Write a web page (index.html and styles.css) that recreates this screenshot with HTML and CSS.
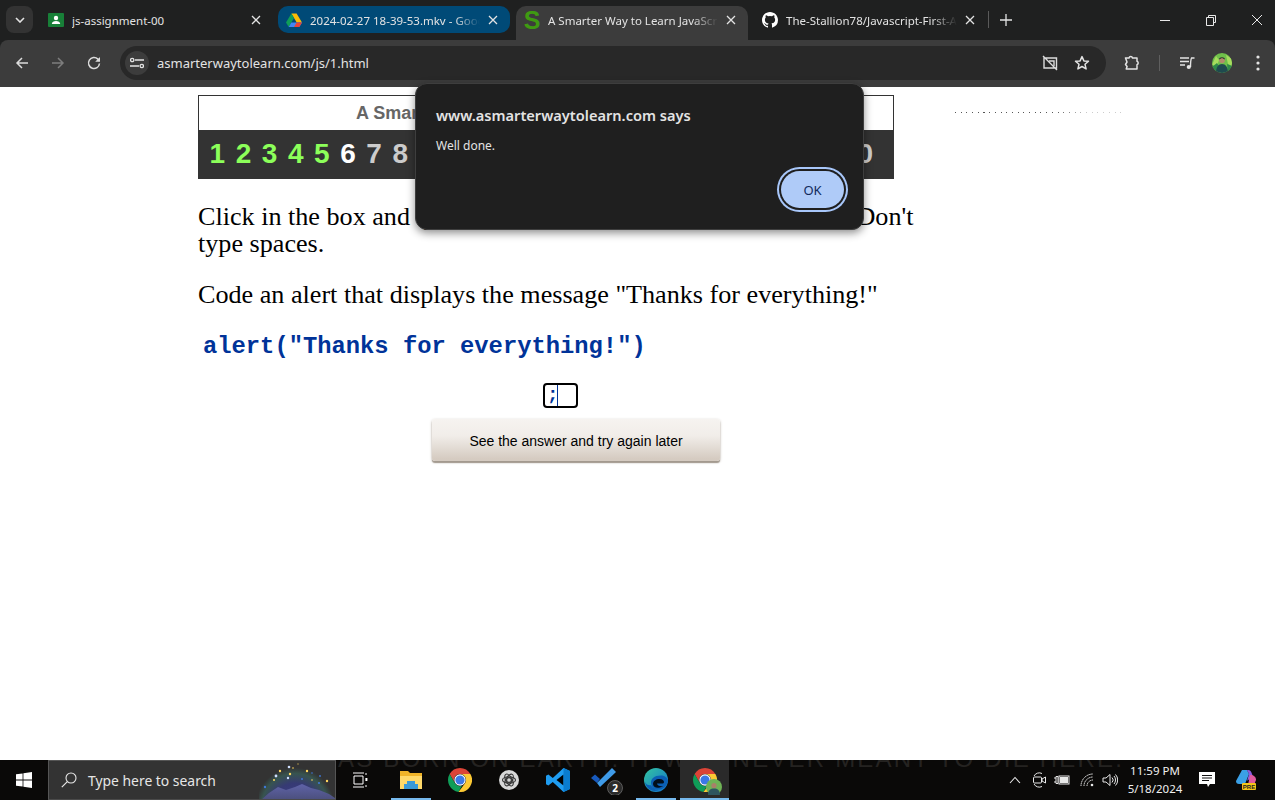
FILE: index.html
```html
<!DOCTYPE html>
<html lang="en">
<head>
<meta charset="utf-8">
<title>A Smarter Way to Learn JavaScript</title>
<link rel="stylesheet" href="styles.css">
</head>
<body>
<svg class="defs" width="0" height="0" aria-hidden="true">
  <symbol id="x" viewBox="0 0 10 10"><path d="M1 1l8 8M9 1l-8 8" fill="none" stroke="currentColor" stroke-width="1.3"/></symbol>
  <symbol id="chrome" viewBox="0 0 24 24">
    <path fill="#db4437" d="M12 0A12 12 0 0 1 22.39 6H12A6 6 0 0 0 6.8 15L1.6 6A12 12 0 0 1 12 0Z"/>
    <path fill="#0f9d58" d="M1.6 6L6.8 15A6 6 0 0 0 14 17.7L10.5 23.9A12 12 0 0 1 1.6 6Z"/>
    <path fill="#fcc934" d="M22.39 6H12A6 6 0 0 1 17.2 15L10.5 23.9A12 12 0 0 0 22.39 6Z"/>
    <circle cx="12" cy="12" r="5.7" fill="#fff"/><circle cx="12" cy="12" r="4.6" fill="#3b78e7"/>
  </symbol>
</svg>

<header class="browser">
  <div class="tabstrip">
    <div class="tabsearch"><svg width="10" height="6" viewBox="0 0 10 6"><path d="M1 1l4 4 4-4" fill="none" stroke="#e3e3e3" stroke-width="1.6"/></svg></div>
    <div class="tab tab-a">
      <svg class="fav" viewBox="0 0 16 16"><rect y="1" width="16" height="14" rx="1" fill="#188038"/><circle cx="8" cy="6" r="2.2" fill="#fff"/><path d="M3.8 12c0-2 2-3 4.2-3s4.2 1 4.2 3z" fill="#fff"/></svg>
      <span class="tab-title">js-assignment-00</span>
      <svg class="tab-x"><use href="#x"/></svg>
    </div>
    <div class="tab tab-b">
      <svg class="fav" viewBox="0 0 16 16"><path d="M5.4 1.5h5.2L16 10.6h-5.3z" fill="#fbbc04"/><path d="M5.4 1.5L0 10.6l2.7 4.4 5.3-8.9z" fill="#0f9d58"/><path d="M5.3 10.6H16L13.3 15H2.7z" fill="#4285f4"/><path d="M10.7 10.6H16L13.3 15H8z" fill="#ea4335"/></svg>
      <span class="tab-title">2024-02-27 18-39-53.mkv - Google Drive</span>
      <svg class="tab-x"><use href="#x"/></svg>
    </div>
    <div class="tab tab-c">
      <span class="fav-s">S</span>
      <span class="tab-title">A Smarter Way to Learn JavaScript</span>
      <svg class="tab-x"><use href="#x"/></svg>
    </div>
    <div class="tab tab-d">
      <svg class="fav" viewBox="0 0 16 16"><path fill="#fff" d="M8 0C3.58 0 0 3.58 0 8c0 3.54 2.29 6.53 5.47 7.59.4.07.55-.17.55-.38v-1.34c-2.23.48-2.7-1.07-2.7-1.07-.36-.92-.89-1.17-.89-1.17-.73-.5.05-.49.05-.49.8.06 1.23.83 1.23.83.71 1.22 1.87.87 2.33.66.07-.52.28-.87.51-1.07-1.78-.2-3.64-.89-3.64-3.95 0-.87.31-1.59.83-2.15-.08-.2-.36-1.02.08-2.12 0 0 .67-.21 2.2.82a7.6 7.6 0 0 1 4 0c1.53-1.04 2.2-.82 2.2-.82.44 1.1.16 1.92.08 2.12.51.56.82 1.27.82 2.15 0 3.07-1.87 3.75-3.65 3.95.29.25.54.73.54 1.48v2.2c0 .21.15.46.55.38A8 8 0 0 0 16 8c0-4.42-3.58-8-8-8z"/></svg>
      <span class="tab-title">The-Stallion78/Javascript-First-Assignment</span>
      <svg class="tab-x"><use href="#x"/></svg>
    </div>
    <span class="tab-sep"></span>
    <svg class="newtab" viewBox="0 0 12 12"><path d="M6 0v12M0 6h12" stroke="#e3e3e3" stroke-width="1.3"/></svg>
    <div class="winctl">
      <svg viewBox="0 0 12 12"><path d="M1 6.5h10" stroke="#e8e8e8"/></svg>
      <svg viewBox="0 0 12 12"><path d="M1.500 3.500h7v8h-7zM3.500 3.500v-2h7v7h-2" fill="none" stroke="#e8e8e8"/></svg>
      <svg viewBox="0 0 12 12"><path d="M1 1l10 10M11 1L1 11" stroke="#e8e8e8"/></svg>
    </div>
  </div>
  <div class="toolbar">
    <svg class="nav nav-back" viewBox="0 0 14 14"><path d="M13 7H2M7 2L2 7l5 5" fill="none" stroke="#dcdcdc" stroke-width="1.5"/></svg>
    <svg class="nav nav-fwd" viewBox="0 0 14 14"><path d="M1 7h11M7 2l5 5-5 5" fill="none" stroke="#7d7d7d" stroke-width="1.5"/></svg>
    <svg class="nav nav-reload" viewBox="0 0 14 14"><path d="M12.500 7.500A5.500 5.500 0 1 1 10.900 3.100L12.500 5" fill="none" stroke="#dcdcdc" stroke-width="1.5"/><path d="M13 1v4.800H8.200z" fill="#dcdcdc"/></svg>
    <div class="omnibox">
      <div class="site-btn"><svg width="14" height="12" viewBox="0 0 14 12"><path d="M5 3h9M0 9h9" stroke="#e3e3e3" stroke-width="1.4"/><circle cx="2.200" cy="3" r="1.700" fill="none" stroke="#e3e3e3" stroke-width="1.3"/><circle cx="11.800" cy="9" r="1.700" fill="none" stroke="#e3e3e3" stroke-width="1.3"/></svg></div>
      <span class="url">asmarterwaytolearn.com/js/1.html</span>
      <svg class="omni-ico omni-cam" viewBox="0 0 16 16"><path d="M2 3h12.500v10H2zM1 1l14 14" fill="none" stroke="#dcdcdc" stroke-width="1.4"/><path d="M7 6h5v5" fill="none" stroke="#dcdcdc" stroke-width="1.4"/></svg>
      <svg class="omni-ico omni-star" viewBox="0 0 16 16"><path d="M8 1.600l1.900 4.300 4.600.4-3.500 3 1.100 4.600L8 11.500l-4.100 2.400L5 9.300l-3.500-3 4.600-.4z" fill="none" stroke="#e3e3e3" stroke-width="1.500" stroke-linejoin="round"/></svg>
    </div>
    <svg class="tool tool-ext" viewBox="0 0 16 16"><path d="M1.500 3H5a1.800 1.800 0 0 1 3.500 0H13v3.300a1.800 1.800 0 0 1 0 3.400V14H2.200l.9-2.600L1.500 9.500 3 7z" fill="none" stroke="#e3e3e3" stroke-width="1.500" stroke-linejoin="round"/></svg>
    <span class="tool-sep"></span>
    <svg class="tool tool-media" viewBox="0 0 16 16"><path d="M1 3h9M1 6.500h9M1 10h5" stroke="#e3e3e3" stroke-width="1.400"/><path d="M11.500 12c0-4 .5-8 1-9H15.500" fill="none" stroke="#e3e3e3" stroke-width="1.400"/><circle cx="9.800" cy="12" r="2.100" fill="#e3e3e3"/></svg>
    <svg class="avatar" viewBox="0 0 20 20"><defs><clipPath id="av"><circle cx="10" cy="10" r="10"/></clipPath></defs><g clip-path="url(#av)"><rect width="20" height="20" fill="#6fc04a"/><path d="M0 12L4 3l3 4-2 6zM14 2l6 4v7l-4-2z" fill="#a7dc5e"/><path d="M0 14l5-4 2 3-3 7H0zM15 11l5 2v7h-4z" fill="#2f8a4a"/><circle cx="10" cy="7.500" r="2.800" fill="#b48a6c"/><path d="M7 6.500C7 3.500 13 3.500 13 6.500L10 5z" fill="#26302c"/><path d="M4 20c0-6 2.500-9 6-9s6 3 6 9z" fill="#1f4a4f"/></g></svg>
    <svg class="tool-menu" viewBox="0 0 4 16"><circle cx="2" cy="2" r="1.600" fill="#e3e3e3"/><circle cx="2" cy="8" r="1.600" fill="#e3e3e3"/><circle cx="2" cy="14" r="1.600" fill="#e3e3e3"/></svg>
  </div>
</header>

<main class="page">
  <div class="lesson">
    <section class="banner">
      <div class="banner-title">A Smarter Way to Learn JavaScript Exercises</div>
      <div class="banner-nums">
        <span class="done">1</span><span class="done">2</span><span class="done">3</span><span class="done">4</span><span class="done">5</span><span class="now">6</span><span>7</span><span>8</span><span>9</span><span>10</span><span>11</span><span>12</span><span>13</span><span>14</span><span>15</span><span>16</span><span>17</span><span>18</span><span class="last">20</span>
      </div>
    </section>
    <p class="instr">Click in the box and type the code, then press Enter to answer. Don't type spaces.</p>
    <p class="instr task">Code an alert that displays the message "Thanks for everything!"</p>
    <p class="code">alert("Thanks for everything!")</p>
    <div class="answer"><div class="answer-box"><span class="semi">;</span><span class="caret"></span></div></div>
    <div class="answer-btn-row"><button class="see-btn">See the answer and try again later</button></div>
  </div>
  <div class="dots"></div>

  <div class="dialog" role="alertdialog">
    <div class="dlg-title">www.asmarterwaytolearn.com says</div>
    <div class="dlg-msg">Well done.</div>
    <div class="dlg-actions"><button class="dlg-ok">OK</button></div>
  </div>
</main>

<footer class="taskbar">
  <div class="wall">AS BORN ON EARTH. IT WAS NEVER MEANT TO DIE HERE.</div>
  <div class="start"><svg width="16" height="16" viewBox="0 0 16 16"><path fill="#fff" d="M0 2.300L6.600 1.400V7.600H0zM7.400 1.300L16 0V7.600H7.400zM0 8.400H6.600V14.600L0 13.700zM7.400 8.400H16V16L7.400 14.700z"/></svg></div>
  <div class="search">
    <svg class="search-ico" viewBox="0 0 16 16"><circle cx="10" cy="6" r="5" fill="none" stroke="#e6e6e6" stroke-width="1.100"/><path d="M6.300 9.700L.8 15.200" stroke="#e6e6e6" stroke-width="1.200"/></svg>
    <span class="search-text">Type here to search</span>
    <svg class="search-art" viewBox="0 0 76 40"><defs><radialGradient id="glow" cx="50%" cy="62%" r="52%"><stop offset="0" stop-color="#3e3f8e"/><stop offset=".6" stop-color="#363a74"/><stop offset=".85" stop-color="#37544f"/><stop offset="1" stop-color="#333"/></radialGradient><linearGradient id="mtn" x1="0" y1="0" x2="0" y2="1"><stop offset="0" stop-color="#5f63a8"/><stop offset="1" stop-color="#4b4f7c"/></linearGradient></defs><ellipse cx="36" cy="38" rx="38" ry="38" fill="url(#glow)"/><path d="M2 40L10 33 19 27 27 30 36 27 43 24 52 28 60 30 70 34 76 38V40z" fill="url(#mtn)"/><g fill="#ffd75e"><circle cx="21" cy="11" r="1.200"/><circle cx="31" cy="14" r="1.200"/><circle cx="48" cy="11" r="1.200"/><circle cx="68" cy="21" r="1.200"/><circle cx="15" cy="20" r="1"/><circle cx="53" cy="20" r=".8"/><circle cx="34" cy="8" r=".8"/><circle cx="39" cy="4" r=".8" opacity=".6"/></g><g fill="#cfe0ff"><circle cx="30" cy="7" r="1.300"/><circle cx="17" cy="16" r="1.400"/><circle cx="29" cy="18" r="1.200"/></g><g fill="#3f78d8"><circle cx="6" cy="27" r="1.200"/><circle cx="43" cy="19" r="1"/><circle cx="60" cy="23" r="1.100"/><circle cx="61" cy="16" r=".9"/><circle cx="53" cy="13" r=".8"/></g></svg>
  </div>
  <div class="taskview"><svg width="16" height="16" viewBox="0 0 16 16"><path d="M1 1h11M1 15h11M2 4h9v8H2z" fill="none" stroke="#fff"/><path d="M14 1v2M14 13v2" stroke="#fff"/><rect x="13.400" y="6" width="2" height="3" fill="#fff"/></svg></div>
  <div class="apps">
    <div class="app on"><svg width="22" height="20" viewBox="0 0 22 20"><path d="M0 1h8l2 2h12v16H0z" fill="#f0b429"/><path d="M0 6h22v13H0z" fill="#ffd96a"/><path d="M7 11h8v3h3v5H4v-5h3z" fill="#3a9ad9"/></svg></div>
    <div class="app"><svg width="24" height="24"><use href="#chrome"/></svg></div>
    <div class="app"><svg width="20" height="20" viewBox="0 0 20 20"><circle cx="10" cy="10" r="10" fill="#d8d8d8"/><g fill="none" stroke="#333" stroke-width="1.100"><circle cx="10" cy="10" r="2.400"/><ellipse cx="10" cy="10" rx="6.500" ry="3.200"/><ellipse cx="10" cy="10" rx="6.500" ry="3.200" transform="rotate(60 10 10)"/><ellipse cx="10" cy="10" rx="6.500" ry="3.200" transform="rotate(120 10 10)"/></g></svg></div>
    <div class="app"><svg width="24" height="24" viewBox="0 0 24 24"><path d="M17.500 0L24 3v18l-6.500 3L6.800 14 2.400 17.500 0 16.300V7.700L2.400 6.500 6.800 10z" fill="#1f9cf0"/><path d="M17.500 6.500L10.500 12l7 5.500z" fill="#000"/><path d="M17.500 0L24 3v18l-6.500 3z" fill="#0a7ccf"/></svg></div>
    <div class="app"><svg width="32" height="30" viewBox="0 0 32 30"><path d="M0 13l4-3.500L9 14 6 18z" fill="#185abd"/><path d="M6 18L21 3l4 4L9 22z" fill="#3f9be8"/><circle cx="24" cy="23" r="7.500" fill="#2b2b2b" stroke="#888" stroke-width=".6"/><text class="badge-2" x="24" y="27">2</text></svg></div>
    <div class="app on"><svg width="24" height="24" viewBox="0 0 24 24"><defs><linearGradient id="edge" x1="0" y1="0" x2="1" y2="1"><stop offset="0" stop-color="#34c6a0"/><stop offset="1" stop-color="#1070d0"/></linearGradient></defs><circle cx="12" cy="12" r="12" fill="url(#edge)"/><path d="M24 13c0-3-3-5.500-7-5.500C10 7.500 7 11 7 14.500c0 4 3.500 7.500 8 7.500-6 3-13-1-14-8 1 2.500 4 4 6 3 1 3 5 5 9 4.500 4-.5 7-4 8-8.500z" fill="#0b5fb4"/><path d="M9 16c0-3 3-5 6.500-5 3 0 4.500 1.500 4.500 3 0 1-1 1.500-2 1.500h-5c0 2 3 3 6 2.500-4 3-10 2-10-2z" fill="#000" opacity=".85"/></svg></div>
    <div class="app active on"><svg width="24" height="24"><use href="#chrome"/></svg><svg class="app-avatar" viewBox="0 0 16 16"><circle cx="8" cy="8" r="8" fill="#6fb356"/><circle cx="8" cy="6.500" r="2.600" fill="#a98069"/><path d="M2 16c0-5 2.500-6.500 6-6.500s6 1.500 6 6.500z" fill="#2e5560"/></svg></div>
  </div>
  <div class="tray">
    <svg class="tr tr-chev" viewBox="0 0 12 8"><path d="M1 7l5-5.500L11 7" fill="none" stroke="#e8e8e8" stroke-width="1.100"/></svg>
    <svg class="tr tr-meet" viewBox="0 0 16 16"><path d="M3 4a6 6 0 0 1 8 -2.500M3 12a6 6 0 0 0 8 2.500" fill="none" stroke="#e8e8e8"/><rect x="2.500" y="5" width="8" height="6" rx="1" fill="none" stroke="#e8e8e8"/><path d="M11 7l3.500-2v6L11 9z" fill="none" stroke="#e8e8e8"/></svg>
    <svg class="tr tr-batt" viewBox="0 0 16 12"><path d="M0 4h2M0 8h2M2 2.500h2v7H2z" stroke="#e8e8e8" fill="none"/><rect x="5" y="2" width="10" height="8" fill="none" stroke="#e8e8e8"/><rect x="6" y="3" width="8" height="6" fill="#e8e8e8"/></svg>
    <svg class="tr tr-wifi" viewBox="0 0 16 14"><path d="M1 13a12 12 0 0 1 12-12M4 13a9 9 0 0 1 9-9M7 13a6 6 0 0 1 6-6" fill="none" stroke="#e8e8e8" stroke-dasharray="1.500 .5"/><circle cx="12" cy="12" r="1.300" fill="#e8e8e8"/></svg>
    <svg class="tr tr-vol" viewBox="0 0 16 14"><path d="M1 5h3l4-3.500v11L4 9H1z" fill="none" stroke="#e8e8e8"/><path d="M10 4.500a3.500 3.500 0 0 1 0 5M12 3a6 6 0 0 1 0 8M13.500 1.500a8 8 0 0 1 0 11" fill="none" stroke="#e8e8e8"/></svg>
    <div class="clock"><span>11:59 PM</span><span>5/18/2024</span></div>
    <svg class="tr tr-note" viewBox="0 0 16 16"><path d="M0 0h16v12h-5l-2 3-1-3H0z" fill="#fff"/><path d="M3 3.500h10M3 6h10M3 8.500h7" stroke="#111"/></svg>
    <svg class="tr tr-copilot" viewBox="0 0 22 22"><path d="M6 1h5l2 4-4 10H3a3 3 0 0 1-3-3z" fill="#3ba0e6"/><path d="M11 1c3-.500 4 1 5 4l3 8c-3-3-6-3-8-1l2-7z" fill="#8a5be0"/><path d="M14 6c4 0 6 2 6 5l-2 5h-6z" fill="#e05a9e"/><rect x="6" y="14" width="14" height="7" rx="1" fill="#f5c518"/><text class="pre" x="13" y="20">PRE</text></svg>
  </div>
</footer>
</body>
</html>
```
FILE: styles.css
```css
* { box-sizing: border-box; }
html, body { margin: 0; height: 100%; }
body {
  width: 1275px;
  height: 800px;
  overflow: hidden;
  display: flex;
  flex-direction: column;
  background: #fff;
  font-family: "Liberation Serif", serif;
}
.defs { position: absolute; }

/* browser chrome */
.browser { flex: none; height: 87px; background: #1f2020; font-family: "Noto Sans", sans-serif; }
.tabstrip { height: 40px; display: flex; align-items: flex-start; padding: 6px 0 0 6px; position: relative; }
.tabsearch { width: 27px; height: 27px; border-radius: 8px; background: #333; display: flex; align-items: center; justify-content: center; flex: none; }
.tab { flex: none; display: flex; align-items: center; height: 27px; font-size: 11.5px; color: #e3e3e3; }
.fav { width: 16px; height: 16px; flex: none; }
.tab-title { flex: 1; min-width: 0; white-space: nowrap; overflow: hidden; margin-left: 8px; padding-top: 1px; -webkit-mask-image: linear-gradient(to right, #000 85%, transparent); mask-image: linear-gradient(to right, #000 85%, transparent); }
.tab-x { width: 10px; height: 10px; flex: none; margin-left: 8px; margin-right: 12px; color: #e3e3e3; }
.tab-a { width: 225px; margin-left: 15px; }
.tab-a .tab-title { -webkit-mask-image: none; mask-image: none; }
.tab-b { width: 232px; margin-left: 5px; padding-left: 8px; background: #004a77; border-radius: 10px; }
.tab-c { width: 232px; margin-left: 6px; height: 34px; padding: 0 0 6px 6px; background: #3c3c3c; border-radius: 10px 10px 0 0; }
.tab-c .tab-title { margin-left: 6px; }
.fav-s { width: 20px; flex: none; color: #3f9a12; font: bold 25px/1 "Liberation Sans", sans-serif; text-align: center; }
.tab-d { width: 225px; margin-left: 14px; }
.tab-sep { width: 1px; height: 17px; margin: 5px 0 0 1px; background: #5a5a5a; flex: none; }
.newtab { width: 12px; height: 12px; margin: 8px 0 0 11px; flex: none; }
.winctl { display: flex; margin-left: auto; padding-right: 12px; gap: 34px; margin-top: 8px; }
.winctl svg { width: 12px; height: 12px; }

.toolbar { height: 47px; display: flex; align-items: center; padding-bottom: 1px; background: #3c3c3c; border-radius: 8px 8px 0 0; }
.nav { width: 14px; height: 14px; flex: none; }
.nav-back { margin-left: 15px; }
.nav-fwd { margin-left: 22px; }
.nav-reload { margin-left: 22px; }
.omnibox { width: 986px; height: 34px; margin-left: 19px; border-radius: 17px; background: #282828; display: flex; align-items: center; padding: 0 16px 0 5px; flex: none; }
.site-btn { width: 24px; height: 24px; border-radius: 50%; background: #3c3c3c; display: flex; align-items: center; justify-content: center; flex: none; }
.url { margin-left: 8px; font-size: 13px; color: #e3e3e3; }
.omni-ico { width: 16px; height: 16px; flex: none; }
.omni-cam { margin-left: auto; }
.omni-star { margin-left: 16px; }
.tool { width: 16px; height: 16px; flex: none; }
.tool-ext { margin-left: 18px; }
.tool-sep { width: 1px; height: 16px; margin-left: 19px; background: #5f5f5f; flex: none; }
.tool-media { margin-left: 19px; }
.avatar { width: 20px; height: 20px; margin-left: 17px; flex: none; }
.tool-menu { width: 4px; height: 16px; margin-left: 24px; flex: none; }

/* page */
.page { flex: 1; min-height: 0; position: relative; display: flex; align-items: flex-start; padding: 8px 0 0 198px; }
.lesson { width: 722px; flex: none; }
.banner { width: 696px; height: 84px; border: 1px solid #333; display: flex; flex-direction: column; font-family: "Liberation Sans", sans-serif; font-weight: bold; }
.banner-title { height: 34px; line-height: 34px; padding-left: 157px; font-size: 18px; color: #666; white-space: nowrap; }
.banner-nums { flex: 1; display: flex; align-items: center; gap: 10.55px; padding: 0 20px 0 10.5px; background: #333; color: #ccc; font-size: 28px; }
.banner-nums .done { color: #8cff5a; }
.banner-nums .now { color: #fff; }
.banner-nums .last { margin-left: auto; }
.instr { margin: 24px 0 0; width: 722px; font-size: 26.15px; line-height: 27px; color: #000; }
.instr.task { margin-top: 24px; }
.code { margin: 25px 0 0 5px; font: bold 23.8px/27px "Liberation Mono", monospace; color: #003399; }
.answer { display: flex; margin-top: 23px; padding-left: 345px; }
.answer-box { width: 35px; height: 25px; border: 2px solid #000; border-radius: 4px; display: flex; align-items: center; font: bold 19px/1 "Liberation Mono", monospace; color: #003399; padding-left: 2px; }
.semi { width: 10px; }
.caret { width: 1px; height: 21px; background: #003399; }
.answer-btn-row { padding-left: 234px; margin-top: 11px; }
.see-btn { display: block; width: 288px; height: 42px; border: 0; padding: 2px 0 0; border-radius: 3px; font: 14px "Liberation Sans", sans-serif; color: #000; background: linear-gradient(to bottom, #f6f3f0 0%, #f1ede9 40%, #d5cbc1 95%); box-shadow: 0 2px 1px #a39a8f, 0 1px 3px #bdb6ae; }
.dots { width: 166px; height: 1px; margin: 17px 0 0 35px; background: repeating-linear-gradient(to right, #555 0, #555 1px, transparent 1px, transparent 5.7px); -webkit-mask-image: linear-gradient(to right, #000 60%, rgba(0,0,0,.3) 80%); mask-image: linear-gradient(to right, #000 60%, rgba(0,0,0,.3) 80%); }

/* alert dialog */
.dialog { position: absolute; left: 415px; top: -4px; width: 449px; height: 147px; padding: 21px 19px 0 20px; border-radius: 12px; background: #1f1f1f; border: 1px solid #3e3e3e; box-shadow: 0 3px 8px rgba(0,0,0,.45); font-family: "Noto Sans", sans-serif; color: #e3e3e3; }
.dlg-title { font-size: 14.6px; line-height: 20px; font-weight: 600; }
.dlg-msg { font-size: 12px; line-height: 18px; margin-top: 12px; }
.dlg-actions { display: flex; justify-content: flex-end; margin-top: 16px; }
.dlg-ok { width: 63px; height: 37px; padding: 0; border-radius: 19px; border: 0; box-shadow: 0 0 0 2px #1f1f1f, 0 0 0 4px #a8c7fa; background: #afcbf8; color: #0f2a5c; font: 13px "Noto Sans", sans-serif; }

/* taskbar */
.taskbar { flex: none; height: 40px; position: relative; display: flex; overflow: hidden; background: #0a0908; font-family: "Noto Sans", sans-serif; color: #f0f0f0; }
.wall { position: absolute; left: 338px; top: -13px; white-space: nowrap; font: 24px/1 "Liberation Sans", sans-serif; letter-spacing: 2.2px; color: #252321; }
.start { width: 48px; display: flex; align-items: center; justify-content: center; flex: none; position: relative; }
.search { width: 288px; flex: none; position: relative; display: flex; align-items: center; background: #333; border: 1px solid #555; border-bottom-color: #4a4a4a; overflow: hidden; }
.search-ico { width: 16px; height: 16px; margin-left: 12px; flex: none; }
.search-text { margin-left: 11px; font-size: 13.9px; color: #e6e6e6; }
.search-art { width: 76px; height: 40px; margin-left: auto; flex: none; }
.taskview { width: 48px; flex: none; display: flex; align-items: center; justify-content: center; position: relative; }
.apps { display: flex; margin-left: 2px; position: relative; }
.app { width: 49px; height: 40px; display: flex; align-items: center; justify-content: center; position: relative; }
.app.on::after { content: ""; position: absolute; left: 5px; right: 4px; bottom: 0; height: 2px; background: #76b9ed; }
.app.active { background: #2a2a2a; }
.app.active::after { left: 0; right: 0; }
.app-avatar { position: absolute; width: 16px; height: 16px; left: 26px; top: 19px; }
.badge-2 { font: bold 10px "Noto Sans", sans-serif; fill: #fff; text-anchor: middle; }
.tray { margin-left: auto; display: flex; align-items: center; position: relative; padding-right: 17px; }
.tr { flex: none; }
.tr-chev { width: 12px; height: 8px; }
.tr-meet { width: 16px; height: 16px; margin-left: 10px; }
.tr-batt { width: 16px; height: 12px; margin-left: 7px; }
.tr-wifi { width: 16px; height: 14px; margin-left: 10px; }
.tr-vol { width: 16px; height: 14px; margin-left: 6px; }
.clock { width: 62px; margin-left: 6px; display: flex; flex-direction: column; align-items: center; font-size: 11.5px; line-height: 18px; color: #f0f0f0; white-space: nowrap; }
.tr-note { width: 16px; height: 16px; margin-left: 13px; }
.tr-copilot { width: 22px; height: 22px; margin-left: 21px; }
.pre { font: bold 6px "Liberation Sans", sans-serif; fill: #222; text-anchor: middle; }
```
